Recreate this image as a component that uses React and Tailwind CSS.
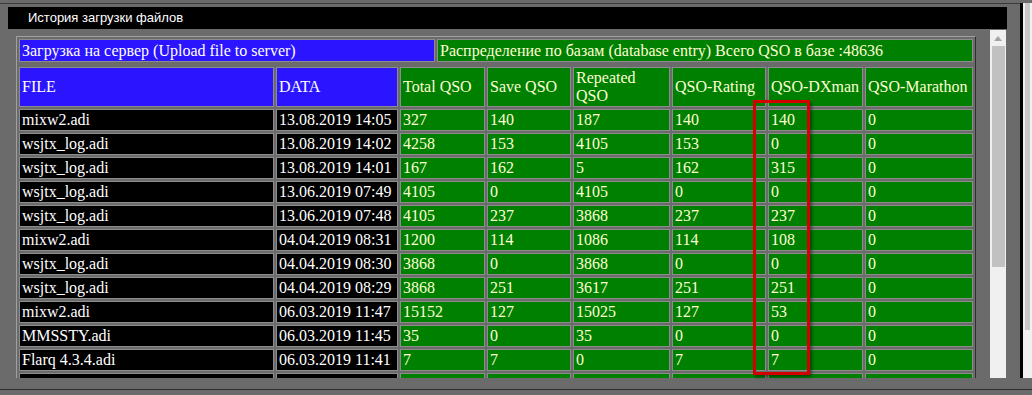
import React from 'react'

const rows = [
  ['mixw2.adi', '13.08.2019 14:05', '327', '140', '187', '140', '140', '0'],
  ['wsjtx_log.adi', '13.08.2019 14:02', '4258', '153', '4105', '153', '0', '0'],
  ['wsjtx_log.adi', '13.08.2019 14:01', '167', '162', '5', '162', '315', '0'],
  ['wsjtx_log.adi', '13.06.2019 07:49', '4105', '0', '4105', '0', '0', '0'],
  ['wsjtx_log.adi', '13.06.2019 07:48', '4105', '237', '3868', '237', '237', '0'],
  ['mixw2.adi', '04.04.2019 08:31', '1200', '114', '1086', '114', '108', '0'],
  ['wsjtx_log.adi', '04.04.2019 08:30', '3868', '0', '3868', '0', '0', '0'],
  ['wsjtx_log.adi', '04.04.2019 08:29', '3868', '251', '3617', '251', '251', '0'],
  ['mixw2.adi', '06.03.2019 11:47', '15152', '127', '15025', '127', '53', '0'],
  ['MMSSTY.adi', '06.03.2019 11:45', '35', '0', '35', '0', '0', '0'],
  ['Flarq 4.3.4.adi', '06.03.2019 11:41', '7', '7', '0', '7', '7', '0'],
  ['', '', '', '', '', '', '', ''],
]

const headers = ['Total QSO', 'Save QSO', 'Repeated QSO', 'QSO-Rating', 'QSO-DXman', 'QSO-Marathon']

const cell = 'border border-[#8c8c8c] px-[2px] py-0 align-middle text-left font-normal leading-[18px]'
const blue = 'bg-[#2b14ff] text-white'
const black = 'bg-black text-white'
const green = 'bg-[#008000] text-[#ffffd6]'

export default function App() {
  return (
    <div className="relative w-[1032px] h-[395px] bg-[#6b6b6b] overflow-hidden flex flex-col">
      <div className="h-[3px] shrink-0" />
      <div className="flex h-[375px] shrink-0">
        <div className="w-[1020px] border-t border-[#3a3a3a] flex flex-col">
          <div className="h-[3px] shrink-0" />
          {/* title bar */}
          <div className="ml-[8px] w-[999px] h-[22px] shrink-0 bg-black pl-[20px] text-[13px] leading-[21px] text-white font-['Liberation_Sans',Arial,sans-serif]">
            История загрузки файлов
          </div>
          {/* scroll panel */}
          <div className="mt-[1px] ml-[8px] h-[348px] flex shrink-0">
            <div className="w-[982px] h-full overflow-hidden pl-[8px] pt-[6px]">
              <div className="w-[960px] border-l border-t border-r border-l-[#a0a0a0] border-t-[#a0a0a0] border-r-[#303030] font-['Liberation_Serif','Times_New_Roman',serif] text-[16px]">
                <table className="w-full table-fixed border-separate border-spacing-[2px]">
                  <tbody>
                    <tr>
                      <td className={`${cell} ${blue} w-[416px] h-[23px] whitespace-nowrap`}>
                        Загрузка на сервер (Upload file to server)
                      </td>
                      <td className={`${cell} ${green} h-[23px] whitespace-nowrap`}>
                        Распределение по базам (database entry) Всего QSO в базе :48636
                      </td>
                    </tr>
                  </tbody>
                </table>
                <table className="mt-[1px] w-full table-fixed border-separate border-spacing-[2px]">
                  <colgroup>
                    <col className="w-[255px]" />
                    <col className="w-[122px]" />
                    <col className="w-[85px]" />
                    <col className="w-[84px]" />
                    <col className="w-[97px]" />
                    <col className="w-[94px]" />
                    <col className="w-[95px]" />
                    <col />
                  </colgroup>
                  <thead>
                    <tr>
                      <th className={`${cell} ${blue} h-[40px]`}>FILE</th>
                      <th className={`${cell} ${blue} h-[40px]`}>DATA</th>
                      {headers.map((h) => (
                        <th key={h} className={`${cell} ${green} h-[40px]`}>{h}</th>
                      ))}
                    </tr>
                  </thead>
                  <tbody>
                    {rows.map((r, i) => (
                      <tr key={i}>
                        {r.map((v, j) => (
                          <td
                            key={j}
                            className={`${cell} ${j < 2 ? black : green} h-[22px] whitespace-nowrap`}
                          >
                            {v}
                          </td>
                        ))}
                      </tr>
                    ))}
                  </tbody>
                </table>
              </div>
            </div>
            {/* inner scrollbar */}
            <div className="w-[16px] h-full bg-[#f0f0f0] flex flex-col items-center">
              <svg width="8" height="5" viewBox="0 0 8 5" className="mt-[6px] shrink-0">
                <polygon points="4,0 8,5 0,5" fill="#a3a3a3" />
              </svg>
              <div className="mt-[5px] w-[13px] h-[221px] bg-[#c1c1c1]" />
            </div>
          </div>
        </div>
        {/* outer scrollbar edge */}
        <div className="w-[3px] bg-black" />
        <div className="flex-1 bg-[#f0f0f0] pl-[2px]">
          <div className="w-[5px] h-[327px] bg-[#c8c8c8]" />
        </div>
      </div>
      <div className="h-[11px] shrink-0" />
      <div className="border-t border-[#2e2e2e]" />

      {/* annotation */}
      <div className="absolute left-[753px] top-[100px] w-[57px] h-[275px] border-[3px] border-[#d40000] shadow-[2px_2px_3px_rgba(0,0,0,0.45)]" />
    </div>
  )
}
